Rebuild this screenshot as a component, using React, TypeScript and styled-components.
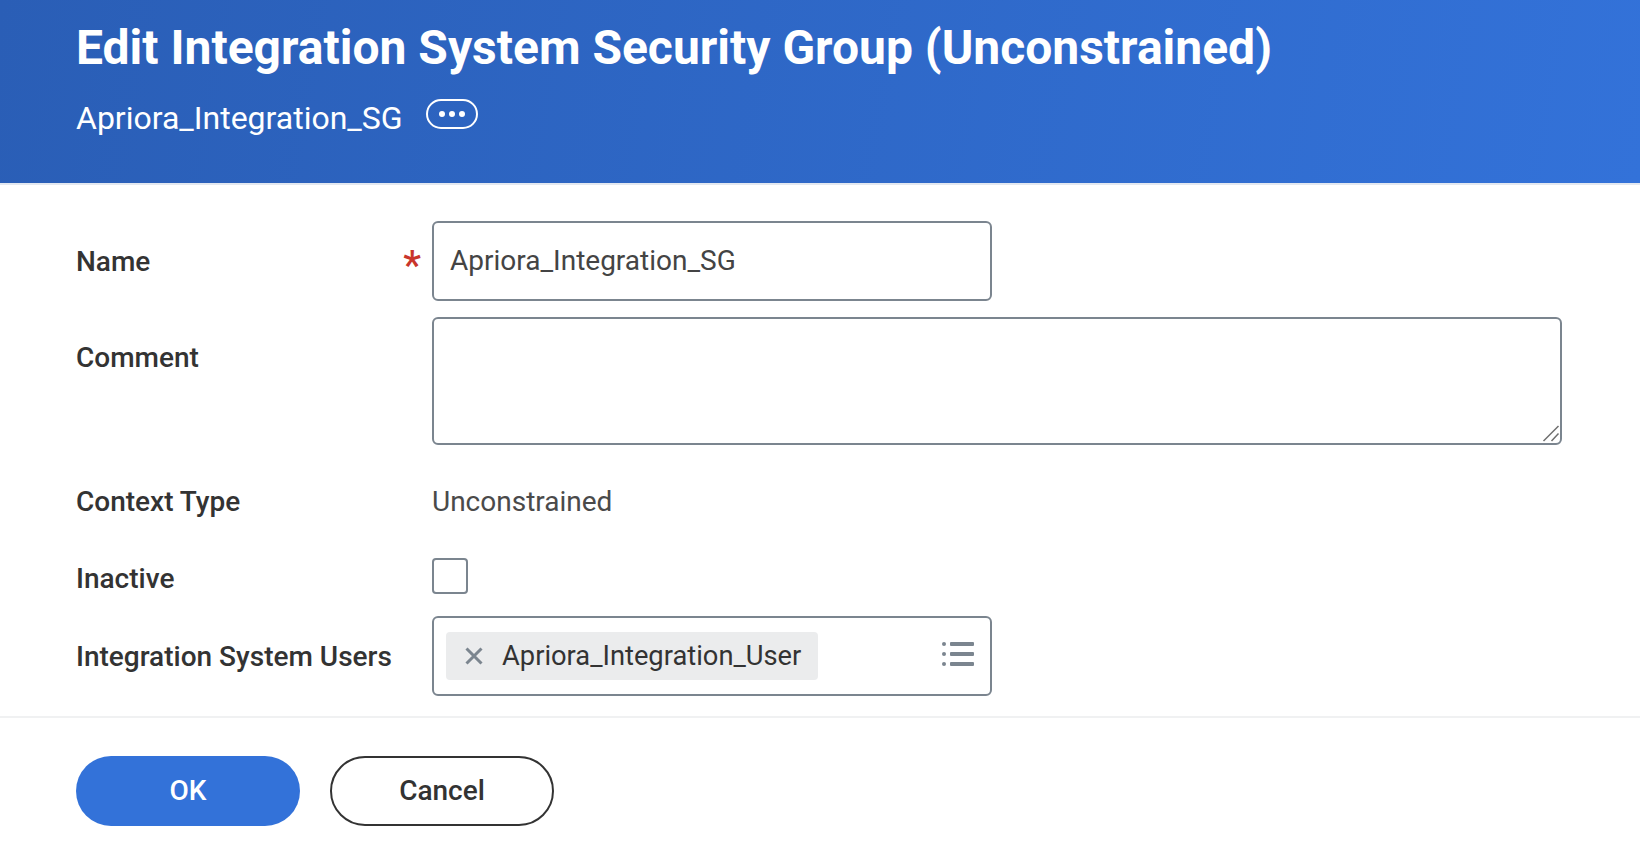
import React from "react";
import styled, { createGlobalStyle } from "styled-components";

const Global = createGlobalStyle`
  html, body { margin: 0; padding: 0; background: #fff; }
  body { font-family: Roboto, "Liberation Sans", sans-serif; color: #333; }
  * { box-sizing: border-box; }
`;

const Page = styled.div`
  width: 1640px;
  height: 846px;
  overflow: hidden;
  background: #fff;
`;

const Header = styled.header`
  height: 185px;
  padding: 21px 76px 0;
  background: linear-gradient(100deg, #2a5eb6 0%, #3372d9 100%);
  border-bottom: 2px solid #e3e8f0;
  color: #fff;
`;

const Title = styled.h1`
  margin: 0;
  font-size: 48px;
  line-height: 54px;
  font-weight: 700;
`;

const SubtitleRow = styled.div`
  display: flex;
  align-items: center;
  gap: 23px;
  margin-top: 24px;
`;

const Subtitle = styled.span`
  font-size: 32px;
  line-height: 38px;
  font-weight: 400;
`;

const MoreButton = styled.button`
  display: flex;
  align-items: center;
  justify-content: center;
  gap: 4px;
  width: 52px;
  height: 30px;
  padding: 0;
  border: 2px solid #fff;
  border-radius: 15px;
  background: transparent;
  margin-top: -8px;
`;

const Dot = styled.i`
  display: block;
  width: 6px;
  height: 6px;
  border-radius: 50%;
  background: #fff;
`;

const Form = styled.form`
  display: flex;
  flex-direction: column;
  padding: 36px 76px 0;
`;

const Row = styled.div<{ $top?: number; $align?: string }>`
  display: flex;
  align-items: ${(p) => p.$align ?? "center"};
  margin-top: ${(p) => p.$top ?? 0}px;
`;

const LabelCell = styled.div<{ $pad?: number }>`
  display: flex;
  justify-content: space-between;
  align-items: center;
  width: 356px;
  padding: ${(p) => p.$pad ?? 0}px 11px 0 0;
`;

const Label = styled.label`
  font-size: 28px;
  line-height: 32px;
  font-weight: 500;
  color: #333;
`;

const Required = styled.span`
  color: #c9352b;
  font-size: 40px;
  line-height: 32px;
  height: 32px;
  margin-top: 8px;
  font-weight: 500;
`;

const TextInput = styled.input`
  width: 560px;
  height: 80px;
  padding: 0 16px 2px;
  border: 2px solid #7b858f;
  border-radius: 6px;
  background: #fff;
  font: 400 28px/32px Roboto, sans-serif;
  color: #444;
  outline: none;
`;

const AreaWrap = styled.div`
  position: relative;
  width: 1130px;
  height: 128px;
`;

const TextArea = styled.textarea`
  display: block;
  width: 100%;
  height: 100%;
  padding: 12px 16px;
  border: 2px solid #7b858f;
  border-radius: 6px;
  background: #fff;
  font: 400 28px/32px Roboto, sans-serif;
  resize: none;
  outline: none;
`;

const Grip = styled.svg`
  position: absolute;
  right: 2px;
  bottom: 2px;
`;

const Value = styled.span`
  font-size: 28px;
  line-height: 32px;
  color: #4a4a4a;
`;

const Checkbox = styled.input.attrs({ type: "checkbox" })`
  appearance: none;
  display: block;
  width: 36px;
  height: 36px;
  margin: 0;
  border: 2px solid #7b858f;
  border-radius: 4px;
  background: #fff;
`;

const Prompt = styled.div`
  display: flex;
  align-items: center;
  justify-content: space-between;
  width: 560px;
  height: 80px;
  padding: 0 16px 0 12px;
  border: 2px solid #7b858f;
  border-radius: 6px;
`;

const Chip = styled.div`
  display: flex;
  align-items: center;
  gap: 19px;
  height: 48px;
  padding: 0 17px 0 19px;
  border-radius: 4px;
  background: #ebeced;
  font-size: 27.3px;
  line-height: 32px;
  color: #333;
`;

const ListGlyph = styled.svg`
  margin-top: -4px;
`;

const Divider = styled.hr`
  margin: 20px 0 0;
  height: 2px;
  border: 0;
  background: #f0f1f2;
`;

const Footer = styled.footer`
  display: flex;
  gap: 30px;
  padding: 38px 76px 0;
`;

const Button = styled.button<{ $primary?: boolean }>`
  width: 224px;
  height: 70px;
  border-radius: 35px;
  border: ${(p) => (p.$primary ? "0" : "2px solid #333")};
  background: ${(p) => (p.$primary ? "#3372d9" : "#fff")};
  color: ${(p) => (p.$primary ? "#fff" : "#333")};
  font: 500 28px/32px Roboto, sans-serif;
`;

const RemoveIcon = () => (
  <svg width="18" height="18" viewBox="0 0 18 18" fill="none" stroke="#7b858f" strokeWidth="3">
    <path d="M1.5 1.5l15 15M16.5 1.5l-15 15" />
  </svg>
);

const ListIcon = () => (
  <ListGlyph width="32" height="24" viewBox="0 0 32 24" fill="#7b858f">
    <rect x="0" y="0" width="4" height="4" rx="2" />
    <rect x="8" y="0" width="24" height="4" rx="1" />
    <rect x="0" y="10" width="4" height="4" rx="2" />
    <rect x="8" y="10" width="24" height="4" rx="1" />
    <rect x="0" y="20" width="4" height="4" rx="2" />
    <rect x="8" y="20" width="24" height="4" rx="1" />
  </ListGlyph>
);

const GripIcon = () => (
  <Grip width="18" height="18" viewBox="0 0 18 18" fill="none" stroke="#6f6f6f" strokeWidth="1.5">
    <path d="M16.5 1L1.5 16M16.5 8.5L9.5 16" />
  </Grip>
);

export default function App() {
  return (
    <Page>
      <Global />
      <Header>
        <Title>Edit Integration System Security Group (Unconstrained)</Title>
        <SubtitleRow>
          <Subtitle>Apriora_Integration_SG</Subtitle>
          <MoreButton type="button" aria-label="Related actions">
            <Dot />
            <Dot />
            <Dot />
          </MoreButton>
        </SubtitleRow>
      </Header>
      <Form>
        <Row>
          <LabelCell $pad={2}>
            <Label>Name</Label>
            <Required>*</Required>
          </LabelCell>
          <TextInput readOnly defaultValue="Apriora_Integration_SG" />
        </Row>
        <Row $top={16} $align="flex-start">
          <LabelCell $pad={25}>
            <Label>Comment</Label>
          </LabelCell>
          <AreaWrap>
            <TextArea />
            <GripIcon />
          </AreaWrap>
        </Row>
        <Row $top={41}>
          <LabelCell>
            <Label>Context Type</Label>
          </LabelCell>
          <Value>Unconstrained</Value>
        </Row>
        <Row $top={40} $align="flex-start">
          <LabelCell $pad={5}>
            <Label>Inactive</Label>
          </LabelCell>
          <Checkbox />
        </Row>
        <Row $top={21}>
          <LabelCell $pad={2}>
            <Label>Integration System Users</Label>
          </LabelCell>
          <Prompt>
            <Chip>
              <RemoveIcon />
              <span>Apriora_Integration_User</span>
            </Chip>
            <ListIcon />
          </Prompt>
        </Row>
      </Form>
      <Divider />
      <Footer>
        <Button type="button" $primary>OK</Button>
        <Button type="button">Cancel</Button>
      </Footer>
    </Page>
  );
}
